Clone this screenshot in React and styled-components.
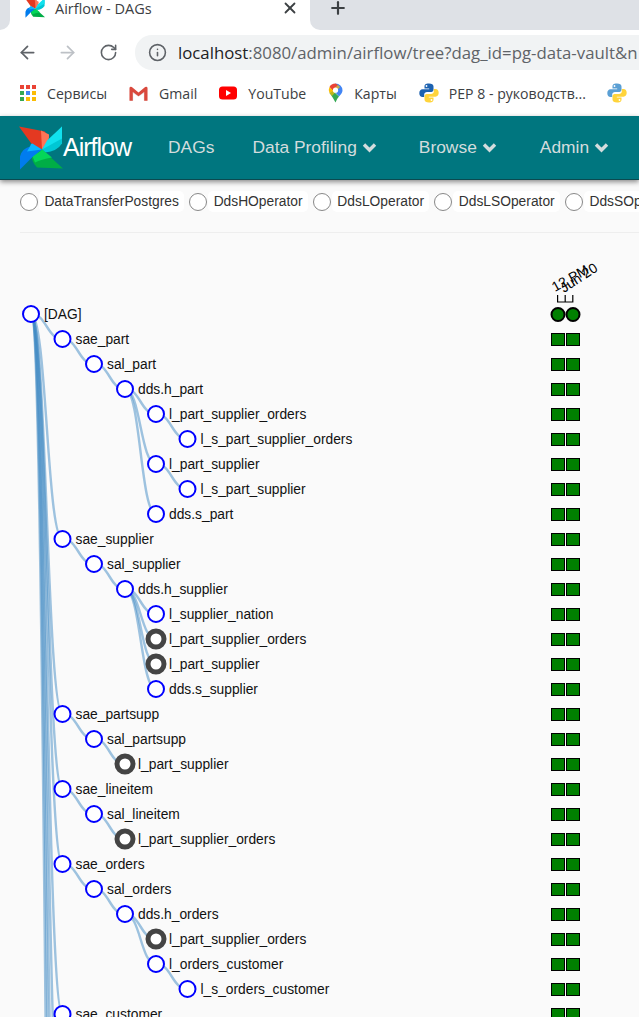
import { Fragment } from "react"
import styled, { createGlobalStyle } from "styled-components"
import { ArrowLeft, ArrowRight, RotateCw, Info, Plus, X } from "lucide-react"

const GlobalStyle = createGlobalStyle`
    html, body {
        margin: 0;
        padding: 0;
        background: #fff;
    }
`

const Page = styled.div`
    width: 639px;
    height: 1017px;
    overflow: hidden;
    font-family: "Liberation Sans", Arial, sans-serif;
`

const TabStrip = styled.div`
    display: flex;
    height: 30px;
    background: #fff;
`

const TabGap = styled.div`
    background: #dee1e6;
    width: ${(p) => p.$width || "auto"};
    flex: ${(p) => (p.$grow ? 1 : "none")};
    border-radius: ${(p) => (p.$grow ? "0 0 0 10px" : "0 0 10px 0")};
    display: flex;
    align-items: flex-start;
    padding-left: ${(p) => (p.$grow ? "18px" : "0")};
    color: #3c4043;
`

const Tab = styled.div`
    width: 300px;
    height: 16px;
    display: flex;
    align-items: center;
    padding-left: 15px;
    box-sizing: border-box;
    font-family: "Open Sans", sans-serif;
    font-size: 14.5px;
    color: #3c4043;
    gap: 10px;
`

const TabTitle = styled.span`
    flex: 1;
`

const TabClose = styled.span`
    display: flex;
    margin-right: 11px;
    color: #3c4043;
`

const Toolbar = styled.div`
    display: flex;
    align-items: center;
    height: 35px;
    margin-top: 5px;
    color: #5f6368;
`

const ToolButton = styled.span`
    display: flex;
    width: 24px;
    justify-content: center;
    margin-left: ${(p) => p.$left}px;
    color: ${(p) => (p.$disabled ? "#bdc1c6" : "#5f6368")};
`

const AddressBar = styled.div`
    flex: 1;
    height: 35px;
    margin-left: 15px;
    padding-left: 13px;
    display: flex;
    align-items: center;
    gap: 11px;
    background: #f1f3f4;
    border-radius: 17px 0 0 17px;
    overflow: hidden;
    svg {
        flex: none;
    }
`

const Url = styled.span`
    font-family: "Open Sans", sans-serif;
    font-size: 16.8px;
    white-space: nowrap;
    color: #5f6368;
    b {
        font-weight: 400;
        color: #202124;
    }
`

const Bookmarks = styled.div`
    display: flex;
    align-items: center;
    height: 46px;
    padding-left: 20px;
    font-family: "Open Sans", sans-serif;
    font-size: 14.1px;
    color: #3c4043;
    white-space: nowrap;
    overflow: hidden;
`

const Bookmark = styled.span`
    display: flex;
    align-items: center;
    gap: ${(p) => p.$gap || 11}px;
    margin-right: ${(p) => p.$right || 22}px;
    flex: none;
`

const AppsGrid = styled.span`
    display: grid;
    grid-template-columns: repeat(3, 4px);
    grid-auto-rows: 4px;
    gap: 2px;
`

const AppsDot = styled.i`
    background: ${(p) => p.$color};
`

const Navbar = styled.nav`
    display: flex;
    align-items: center;
    height: 63px;
    padding-left: 19px;
    background: #00767f;
    border-bottom: 1px solid #0b4a50;
    box-shadow: 0 2px 5px rgba(0, 0, 0, 0.45);
    position: relative;
    white-space: nowrap;
`

const Brand = styled.div`
    display: flex;
    align-items: center;
    margin-right: 17px;
    color: #fff;
    font-size: 25px;
    letter-spacing: -1px;
`

const NavItem = styled.span`
    display: flex;
    align-items: center;
    gap: 5px;
    padding: 0 20px;
    font-size: 17.4px;
    color: #d3dcdd;
    margin-right: ${(p) => p.$right || 0}px;
`

const Content = styled.div`
    background: #fafafa;
    height: 837px;
`

const Legend = styled.div`
    display: flex;
    align-items: center;
    gap: 5px;
    height: 53px;
    margin-left: 20px;
    padding-bottom: 9px;
    box-sizing: border-box;
    border-bottom: 1px solid #eee;
    overflow: hidden;
`

const LegendDot = styled.span`
    flex: none;
    width: 16px;
    height: 16px;
    border: 1.5px solid #888;
    border-radius: 50%;
    background: #fff;
    margin-right: -4px;
`

const LegendLabel = styled.span`
    flex: none;
    padding: 3px 5.4px;
    border-radius: 5px;
    background: #fff;
    font-size: 13.8px;
    color: #333;
`

const TreeSvg = styled.svg`
    display: block;
    font-family: "Liberation Sans", Arial, sans-serif;
    font-size: 13.8px;
`

const Link = styled.path`
    fill: none;
    stroke: #3f8ac4;
    stroke-opacity: 0.5;
    stroke-width: 2.4px;
`

const Node = styled.circle`
    fill: #fff;
    stroke: ${(p) => (p.$upstream ? "#444" : "#0000ff")};
    stroke-width: ${(p) => (p.$upstream ? 5 : 2)}px;
`

const Label = styled.text`
    fill: #111;
`

const Square = styled.rect`
    fill: #008000;
    stroke: #000;
    stroke-width: 1px;
`

const RunDot = styled.circle`
    fill: #008000;
    stroke: #000;
    stroke-width: 2px;
`

const Tick = styled.path`
    fill: none;
    stroke: #000;
    stroke-width: 1.2px;
`

const tasks = [
    ["[DAG]", 0],
    ["sae_part", 1],
    ["sal_part", 2],
    ["dds.h_part", 3],
    ["l_part_supplier_orders", 4],
    ["l_s_part_supplier_orders", 5],
    ["l_part_supplier", 4],
    ["l_s_part_supplier", 5],
    ["dds.s_part", 4],
    ["sae_supplier", 1],
    ["sal_supplier", 2],
    ["dds.h_supplier", 3],
    ["l_supplier_nation", 4],
    ["l_part_supplier_orders", 4, true],
    ["l_part_supplier", 4, true],
    ["dds.s_supplier", 4],
    ["sae_partsupp", 1],
    ["sal_partsupp", 2],
    ["l_part_supplier", 3, true],
    ["sae_lineitem", 1],
    ["sal_lineitem", 2],
    ["l_part_supplier_orders", 3, true],
    ["sae_orders", 1],
    ["sal_orders", 2],
    ["dds.h_orders", 3],
    ["l_part_supplier_orders", 4, true],
    ["l_orders_customer", 4],
    ["l_s_orders_customer", 5],
    ["sae_customer", 1],
]

const depthX = [31, 62.5, 94, 125, 156, 187.5]
const rowY = (i) => 314 + i * 25

// rows below the fold still send their links through the trunk
const hiddenRows = [34, 42, 52, 66]

const diagonal = (x1, y1, x2, y2) => {
    const mid = (x1 + x2) / 2
    return `M${x1},${y1}C${mid},${y1} ${mid},${y2} ${x2},${y2}`
}

const links = []
const lastAtDepth = []
tasks.forEach(([, depth], i) => {
    lastAtDepth[depth] = i
    if (depth > 0) {
        const parent = lastAtDepth[depth - 1]
        links.push(diagonal(depthX[depth - 1], rowY(parent), depthX[depth], rowY(i)))
    }
})
hiddenRows.forEach((row) => links.push(diagonal(31, 314, 62.5, rowY(row))))

const legend = ["DataTransferPostgres", "DdsHOperator", "DdsLOperator", "DdsLSOperator", "DdsSOperator"]

const appsColors = ["#ea4335", "#ea4335", "#ea4335", "#34a853", "#4285f4", "#fbbc04", "#34a853", "#fbbc04", "#fbbc04"]

function Pinwheel({ size }) {
    return (
        <svg width={size} height={size} viewBox="0 0 44 43">
            <path d="M0 0L26 5Q30 10 23 23L13 18Z" fill="#e43921" />
            <path d="M22 4L30 8Q31 14 23 23Z" fill="#ff7557" />
            <path d="M43 0V17Q38 25 26 26L23 23Z" fill="#00c7d4" />
            <path d="M43 0L28 14L23 23L43 12Z" fill="#11e1ee" />
            <path d="M44 42L18 41Q12 35 13 28L23 23Z" fill="#00ad46" />
            <path d="M13 28Q20 27 23 23L33 31Q22 33 16 36Z" fill="#04d659" />
            <path d="M1 43V30Q3 22 11 20L23 23L14 30Z" fill="#017cee" />
            <path d="M11 20Q12 15 15 18L23 23L8 25Z" fill="#0cb6ff" />
        </svg>
    )
}

function Chevron() {
    return (
        <svg width="15" height="11" viewBox="0 0 15 11">
            <path d="M2 2.5L7.5 8L13 2.5" fill="none" stroke="currentColor" strokeWidth="3.4" />
        </svg>
    )
}

function GmailIcon() {
    return (
        <svg width="19" height="15" viewBox="0 0 20 15">
            <path d="M1 15V3L10 9L19 3V15H15.5V7.5L10 11L4.5 7.5V15Z" fill="#e8e8e8" />
            <path d="M0.5 15V2Q0.5 0 3 0.6L10 6.5L17 0.6Q19.5 0 19.5 2V15H16V6L10 10.5L4 6V15Z" fill="#d9493d" />
        </svg>
    )
}

function YoutubeIcon() {
    return (
        <svg width="18" height="14" viewBox="0 0 18 14">
            <rect width="18" height="13" y="0.5" rx="3.5" fill="#f00" />
            <path d="M7 4L12 7L7 10Z" fill="#fff" />
        </svg>
    )
}

function MapsIcon() {
    return (
        <svg width="15" height="20" viewBox="0 0 15 20">
            <path d="M7.5 0.5A7 7 0 0 1 14.5 7.5Q14.5 10 11 13.5L4 6Z" fill="#4285f4" />
            <path d="M7.5 0.5Q3 0.5 1.5 4L5 8L10 2Z" fill="#ea4335" />
            <path d="M1.5 4Q0 7 1.5 10L5.5 8Z" fill="#fbbc04" />
            <path d="M1.5 10Q4 13 7.5 19.5Q9 15.5 11 13.5L5 8Z" fill="#34a853" />
            <path d="M1.5 10L10 2L12 4L4 13Z" fill="#fbbc04" opacity="0.7" />
            <circle cx="7.5" cy="7.2" r="2.6" fill="#fff" />
        </svg>
    )
}

function PythonIcon({ dark }) {
    const blue = dark ? "#1d62b0" : "#5a9fd4"
    return (
        <svg width="20" height="20" viewBox="0 0 20 20">
            <path d="M10 0.5C6 0.5 5.5 2 5.5 3.5V5.5H10.2V6.3H3.5C1.5 6.3 0.3 8 0.3 10.2C0.3 12.5 1.5 14 3.5 14H5.2V11.7C5.2 10 6.5 9 8 9H12.4C13.6 9 14.5 8 14.5 6.8V3.5C14.5 1.5 12.8 0.5 10 0.5Z" fill={blue} />
            <path d="M10 19.5C14 19.5 14.5 18 14.5 16.5V14.5H9.8V13.7H16.5C18.5 13.7 19.7 12 19.7 9.8C19.7 7.5 18.5 6 16.5 6H14.8V8.3C14.8 10 13.5 11 12 11H7.6C6.4 11 5.5 12 5.5 13.2V16.5C5.5 18.5 7.2 19.5 10 19.5Z" fill="#ffd43b" />
            <circle cx="7.5" cy="3" r="0.9" fill="#fff" />
            <circle cx="12.5" cy="17" r="0.9" fill="#fff" />
        </svg>
    )
}

export default function App() {
    return (
        <Page>
            <GlobalStyle />
            <TabStrip>
                <TabGap $width="10px" />
                <Tab>
                    <Pinwheel size={20} />
                    <TabTitle>Airflow - DAGs</TabTitle>
                    <TabClose><X size={18} strokeWidth={2.4} /></TabClose>
                </Tab>
                <TabGap $grow>
                    <Plus size={20} strokeWidth={2.6} style={{ marginTop: -2 }} />
                </TabGap>
            </TabStrip>
            <Toolbar>
                <ToolButton $left={15}><ArrowLeft size={21} /></ToolButton>
                <ToolButton $left={16} $disabled><ArrowRight size={21} /></ToolButton>
                <ToolButton $left={17}><RotateCw size={19} /></ToolButton>
                <AddressBar>
                    <Info size={19} />
                    <Url><b>localhost</b>:8080/admin/airflow/tree?dag_id=pg-data-vault&amp;n</Url>
                </AddressBar>
            </Toolbar>
            <Bookmarks>
                <Bookmark>
                    <AppsGrid>
                        {appsColors.map((color, i) => <AppsDot key={i} $color={color} />)}
                    </AppsGrid>
                    Сервисы
                </Bookmark>
                <Bookmark><GmailIcon />Gmail</Bookmark>
                <Bookmark><YoutubeIcon />YouTube</Bookmark>
                <Bookmark><MapsIcon />Карты</Bookmark>
                <Bookmark $gap={10} $right={21}><PythonIcon dark />PEP 8 - руководств...</Bookmark>
                <Bookmark><PythonIcon /></Bookmark>
            </Bookmarks>
            <Navbar>
                <Brand><Pinwheel size={44} />Airflow</Brand>
                <NavItem $right={-2}>DAGs</NavItem>
                <NavItem $right={2}>Data Profiling <Chevron /></NavItem>
                <NavItem $right={3}>Browse <Chevron /></NavItem>
                <NavItem>Admin <Chevron /></NavItem>
            </Navbar>
            <Content>
                <Legend>
                    {legend.map((name) => (
                        <Fragment key={name}>
                            <LegendDot />
                            <LegendLabel>{name}</LegendLabel>
                        </Fragment>
                    ))}
                </Legend>
                <TreeSvg width="639" height="784" viewBox="0 233 639 784">
                    <g transform="rotate(-29 555 292)"><text x="555" y="292">12 PM</text></g>
                    <g transform="rotate(-33 564 293)"><text x="564" y="293">Jun 20</text></g>
                    <Tick d="M557.6,295V302M565.2,295V302M572.8,295V302M557,302H573.4" />
                    {links.map((d, i) => <Link key={i} d={d} />)}
                    {tasks.map(([name, depth, upstream], i) => (
                        <g key={i}>
                            <Node cx={depthX[depth]} cy={rowY(i)} r={8} $upstream={upstream} />
                            <Label x={depthX[depth] + 13} y={rowY(i) + 5}>{name}</Label>
                            {i === 0 ? (
                                <>
                                    <RunDot cx={558} cy={314.5} r={6.5} />
                                    <RunDot cx={573} cy={314.5} r={6.5} />
                                </>
                            ) : (
                                <>
                                    <Square x={551.5} y={rowY(i) - 5.5} width={13} height={12} />
                                    <Square x={566.5} y={rowY(i) - 5.5} width={13} height={12} />
                                </>
                            )}
                        </g>
                    ))}
                </TreeSvg>
            </Content>
        </Page>
    )
}
